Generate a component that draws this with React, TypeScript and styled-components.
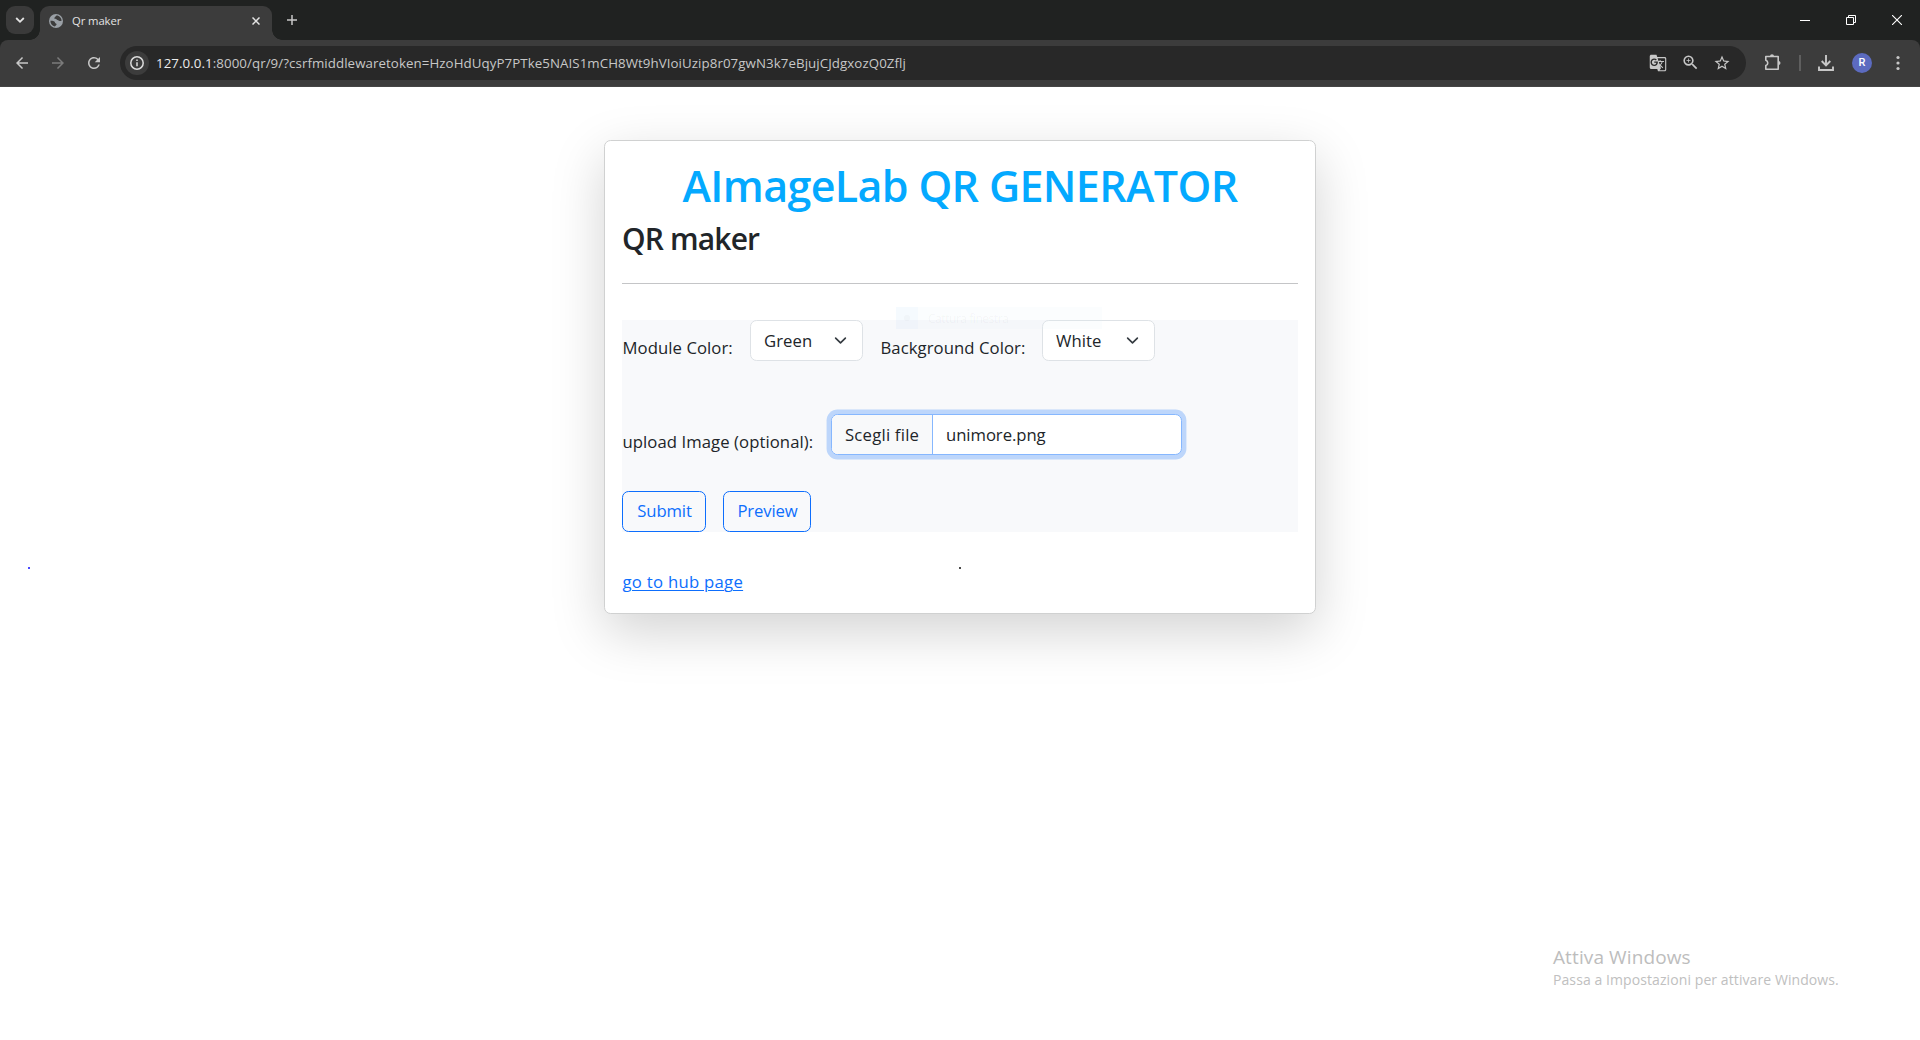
import React from "react";
import styled, { createGlobalStyle, css } from "styled-components";
import {
  MdArrowBack,
  MdArrowForward,
  MdGTranslate,
  MdRefresh,
  MdStarBorder,
  MdZoomIn,
} from "react-icons/md";

const GlobalStyle = createGlobalStyle`
  *, *::before, *::after { box-sizing: border-box; }
  html, body { margin: 0; padding: 0; background: #fff; }
  body { overflow: hidden; }
  svg { display: block; flex: none; }
`;

const Window = styled.div`
  position: relative;
  display: flex;
  flex-direction: column;
  width: 1920px;
  height: 1040px;
  background: #fff;
  color: #212529;
  font-family: "Open Sans", "Noto Sans", sans-serif;
`;

/* ---------- Browser chrome ---------- */

const TabStrip = styled.header`
  display: flex;
  align-items: flex-start;
  height: 40px;
  padding: 6px 0 0 6px;
  background: #202221;
`;

const TabSearch = styled.button`
  display: flex;
  align-items: center;
  justify-content: center;
  width: 28px;
  height: 28px;
  margin-right: 6px;
  padding: 0;
  border: 0;
  border-radius: 9px;
  background: #3a3a3a;
  color: #e3e3e3;
`;

const Tab = styled.div`
  position: relative;
  display: flex;
  align-items: center;
  width: 232px;
  height: 34px;
  padding: 0 12px 5px 9px;
  border-radius: 9px 9px 0 0;
  background: #3c3c3c;
  color: #e3e3e3;

  &::before,
  &::after {
    content: "";
    position: absolute;
    bottom: 0;
    width: 10px;
    height: 10px;
  }
  &::before {
    left: -10px;
    background: radial-gradient(circle at 0 0, transparent 9.5px, #3c3c3c 10px);
  }
  &::after {
    right: -10px;
    background: radial-gradient(circle at 100% 0, transparent 9.5px, #3c3c3c 10px);
  }
`;

const TabTitle = styled.span`
  flex: 1;
  margin-left: 9px;
  font-size: 11.3px;
  line-height: 16px;
  letter-spacing: -0.1px;
  white-space: nowrap;
`;

const NewTab = styled.button`
  display: flex;
  align-items: center;
  justify-content: center;
  width: 28px;
  height: 28px;
  margin-left: 6px;
  padding: 0;
  border: 0;
  background: none;
  color: #c7c7c7;
`;

const WindowControls = styled.div`
  display: flex;
  height: 28px;
  margin-left: auto;
`;

const WindowControl = styled.button`
  display: flex;
  align-items: center;
  justify-content: center;
  width: 46px;
  height: 28px;
  padding: 0;
  border: 0;
  background: none;
  color: #fff;
`;

const ToolbarBack = styled.div`
  background: #202221;
`;

const Toolbar = styled.nav`
  display: flex;
  align-items: center;
  height: 47px;
  padding: 0 4px 1px;
  border-bottom: 1px solid #454545;
  border-radius: 8px 8px 0 0;
  background: #3c3c3c;
`;

const IconSlot = styled.span<{ $w?: number; $dim?: boolean }>`
  display: flex;
  flex: none;
  align-items: center;
  justify-content: center;
  width: ${(p) => p.$w ?? 36}px;
  height: 34px;
  color: ${(p) => (p.$dim ? "#7b7b7b" : "#c7c7c7")};
`;

const Omnibox = styled.div`
  display: flex;
  flex: 1;
  align-items: center;
  height: 34px;
  margin: 0 8px;
  padding: 0 8px 0 5px;
  border-radius: 17px;
  background: #282828;
`;

const SiteInfo = styled.span`
  display: flex;
  align-items: center;
  justify-content: center;
  width: 24px;
  height: 24px;
  border-radius: 50%;
  background: #3c3c3c;
  color: #dcdcdc;
`;

const Url = styled.span`
  flex: 1;
  margin-left: 7px;
  color: #c7c7c7;
  font-size: 13.3px;
  line-height: 20px;
  letter-spacing: 0.072px;
  white-space: nowrap;
`;

const Host = styled.span`
  color: #ececec;
`;

const Separator = styled.i`
  width: 2px;
  height: 16px;
  background: #5f5f5f;
`;

const Avatar = styled.span`
  display: flex;
  align-items: center;
  justify-content: center;
  width: 20px;
  height: 20px;
  border-radius: 50%;
  background: #5c6bc0;
  color: #fff;
  font: 500 11px Roboto, sans-serif;
`;

/* ---------- Page ---------- */

const Page = styled.main`
  display: flex;
  flex: 1;
  align-items: flex-start;
  justify-content: center;
  padding-top: 53px;
`;

const Card = styled.section`
  width: 712px;
  height: 474px;
  padding: 18px 17px 17px;
  border: 1px solid #d0d1d1;
  border-radius: 6.6px;
  background: #fff;
  box-shadow: 0 17.6px 52.8px rgba(0, 0, 0, 0.175);
`;

const Title = styled.h1`
  margin: 0 0 8px;
  color: #04a9ff;
  font-size: 43px;
  font-weight: 600;
  line-height: 53px;
  letter-spacing: -0.65px;
  text-align: center;
  white-space: nowrap;
`;

const Subtitle = styled.h3`
  margin: 0;
  font-size: 30px;
  font-weight: 600;
  line-height: 37px;
  letter-spacing: -0.85px;
`;

const Rule = styled.hr`
  height: 1px;
  margin: 26px 0 36px;
  border: 0;
  background: #c4c5c7;
`;

const Form = styled.form`
  display: flex;
  flex-direction: column;
  background: #f8f9fb;
`;

const bodyText = css`
  font-family: inherit;
  font-size: 16.7px;
  line-height: 26px;
  letter-spacing: 0.07px;
  white-space: nowrap;
`;

const Row = styled.div<{ $after?: number }>`
  display: flex;
  height: 41px;
  margin-bottom: ${(p) => p.$after ?? 0}px;
`;

const Label = styled.label<{ $w: number }>`
  ${bodyText}
  width: ${(p) => p.$w}px;
  padding: 15px 0 0 0.5px;
`;

const SelectBox = styled.div<{ $after?: number }>`
  ${bodyText}
  display: flex;
  align-items: center;
  justify-content: space-between;
  width: 113px;
  height: 41px;
  margin-right: ${(p) => p.$after ?? 0}px;
  padding: 0 15px 0 13px;
  border: 1px solid #dee2e6;
  border-radius: 6.6px;
  background: #fff;
`;

const FileInput = styled.div`
  ${bodyText}
  display: flex;
  width: 351px;
  height: 41px;
  overflow: hidden;
  border: 1px solid #86b7fe;
  border-radius: 6.6px;
  background: #fff;
  box-shadow: 0 0 0 4.4px rgba(13, 110, 253, 0.25);
  line-height: 39px;
`;

const FileButton = styled.span`
  width: 101px;
  padding-left: 13px;
  border-right: 1px solid #86b7fe;
  background: #f8f9fa;
  letter-spacing: 0.22px;
`;

const FileName = styled.span`
  padding-left: 13px;
  letter-spacing: -0.06px;
`;

const OutlineButton = styled.button<{ $w: number }>`
  ${bodyText}
  width: ${(p) => p.$w}px;
  height: 41px;
  margin-right: 17px;
  padding: 0 0 1px 1px;
  border: 1px solid #0d6efd;
  border-radius: 6.6px;
  background: transparent;
  color: #0d6efd;
  letter-spacing: -0.12px;
`;

const HubLink = styled.a`
  ${bodyText}
  display: inline-block;
  margin: 37px 0 0 0.5px;
  color: #0d6efd;
  letter-spacing: 0.28px;
  text-decoration: underline;
  text-decoration-thickness: 1px;
  text-underline-offset: 2px;
`;

/* ---------- Things floating over the page ---------- */

const Speck = styled.i<{ $x: number; $y: number; $color: string }>`
  position: absolute;
  left: ${(p) => p.$x}px;
  top: ${(p) => p.$y}px;
  width: 2px;
  height: 2px;
  background: ${(p) => p.$color};
`;

const CaptureHint = styled.div`
  position: absolute;
  left: 896px;
  top: 307px;
  display: flex;
  align-items: center;
  width: 206px;
  height: 22px;
  background: rgba(225, 240, 250, 0.14);
  color: rgba(70, 80, 90, 0.05);
  font-size: 12px;
  letter-spacing: -0.45px;
`;

const CaptureDot = styled.span`
  display: flex;
  align-items: center;
  justify-content: center;
  width: 22px;
  height: 22px;
  margin-right: 10px;
  background: rgba(200, 230, 255, 0.1);

  &::before {
    content: "";
    width: 6px;
    height: 6px;
    border-radius: 50%;
    background: rgba(90, 100, 110, 0.03);
  }
`;

const Watermark = styled.aside`
  position: absolute;
  left: 1553px;
  top: 944px;
  color: #bdbdbd;
  white-space: nowrap;
`;

const WatermarkTitle = styled.div`
  font-size: 19px;
  line-height: 27px;
  letter-spacing: 0.11px;
`;

const WatermarkText = styled.div`
  font-size: 14px;
  line-height: 18px;
  letter-spacing: 0.085px;
  color: #c0c0c0;
`;

const Chevron = () => (
  <svg width="13" height="13" viewBox="0 0 16 16" fill="none" stroke="#343a40" strokeWidth="2" strokeLinecap="round" strokeLinejoin="round">
    <path d="m2 5 6 6 6-6" />
  </svg>
);

const Globe = () => (
  <svg width="14" height="14" viewBox="0 0 14 14">
    <circle cx="7" cy="7" r="7" fill="#9aa0a6" />
    <path d="M1.400 6.800c1.500-.1 3.300 0 4 .7.8.8.3 1.500 1.400 1.900 1 .4 1 1 .4 1.700-.4.5-.8 1-1.400 1.300C3.200 11.900 1.300 9.600 1.400 6.800Z" fill="#3c3c3c" />
    <path d="M7.600 1.500C6.300 2 6.700 3 5.600 3.500c-.6.5-.3 1.400.7 1.300 1.200-.1 1.200 1.200 2.200 1.300 1 .1 1.200.9 2.300.8.8-.1 1.300.2 1.800-.1C12.500 4.200 10.500 1.500 7.600 1.500Z" fill="#3c3c3c" />
  </svg>
);

export default function App() {
  return (
    <Window>
      <GlobalStyle />
      <TabStrip>
        <TabSearch>
          <svg width="10" height="10" viewBox="0 0 10 10" fill="none" stroke="currentColor" strokeWidth="1.8">
            <path d="m1.200 3 3.800 3.800L8.800 3" />
          </svg>
        </TabSearch>
        <Tab>
          <Globe />
          <TabTitle>Qr maker</TabTitle>
          <svg width="8" height="8" viewBox="0 0 8 8" stroke="currentColor" strokeWidth="1.500">
            <path d="m.5.5 7 7M7.500.5l-7 7" />
          </svg>
        </Tab>
        <NewTab>
          <svg width="10" height="10" viewBox="0 0 10 10" stroke="currentColor" strokeWidth="1.500">
            <path d="M5 0v10M0 5h10" />
          </svg>
        </NewTab>
        <WindowControls>
          <WindowControl>
            <svg width="10" height="10" viewBox="0 0 10 10" stroke="currentColor">
              <path d="M0 5.500h10" />
            </svg>
          </WindowControl>
          <WindowControl>
            <svg width="10" height="10" viewBox="0 0 10 10" fill="none" stroke="currentColor">
              <path d="M.5 2.500h7v7h-7zM2.500 2.500v-2h7v7h-2" />
            </svg>
          </WindowControl>
          <WindowControl>
            <svg width="10" height="10" viewBox="0 0 10 10" stroke="currentColor" strokeWidth="1.100">
              <path d="m0 0 10 10M10 0 0 10" />
            </svg>
          </WindowControl>
        </WindowControls>
      </TabStrip>

      <ToolbarBack>
        <Toolbar>
          <IconSlot><MdArrowBack size={18} /></IconSlot>
          <IconSlot $dim><MdArrowForward size={18} /></IconSlot>
          <IconSlot><MdRefresh size={18} /></IconSlot>
          <Omnibox>
            <SiteInfo>
              <svg width="14" height="14" viewBox="0 0 14 14" fill="none" stroke="currentColor" strokeWidth="1.500">
                <circle cx="7" cy="7" r="6.200" />
                <path d="M7 6.200v4M7 3.600v1.500" />
              </svg>
            </SiteInfo>
            <Url>
              <Host>127.0.0.1</Host>
              :8000/qr/9/?csrfmiddlewaretoken=HzoHdUqyP7PTke5NAIS1mCH8Wt9hVIoiUzip8r07gwN3k7eBjujCJdgxozQ0Zflj
            </Url>
            <IconSlot $w={32}><MdGTranslate size={18} /></IconSlot>
            <IconSlot $w={32}><MdZoomIn size={19} /></IconSlot>
            <IconSlot $w={32}><MdStarBorder size={18} /></IconSlot>
          </Omnibox>
          <IconSlot $w={37}>
            <svg width="17" height="17" viewBox="0 0 17 17" fill="none" stroke="currentColor" strokeWidth="1.600" strokeLinejoin="round">
              <path d="M1.800 2.500h12.400v12.700H1.800v-3.700a2.700 2.700 0 0 0 0-5.200Z" />
              <path d="M6 2.300a2 2 0 0 1 4 0ZM14.500 7a2 2 0 0 1 0 4Z" fill="currentColor" stroke="none" />
            </svg>
          </IconSlot>
          <IconSlot $w={17}><Separator /></IconSlot>
          <IconSlot>
            <svg width="16" height="16" viewBox="0 0 16 16" fill="none" stroke="currentColor" strokeWidth="1.900">
              <path d="M8 0v10M3.700 6 8 10.300 12.300 6M1 11.500v3.500h14v-3.500" />
            </svg>
          </IconSlot>
          <IconSlot><Avatar>R</Avatar></IconSlot>
          <IconSlot>
            <svg width="4" height="16" viewBox="0 0 4 16" fill="currentColor">
              <circle cx="2" cy="2.500" r="1.600" />
              <circle cx="2" cy="8" r="1.600" />
              <circle cx="2" cy="13.500" r="1.600" />
            </svg>
          </IconSlot>
        </Toolbar>
      </ToolbarBack>

      <Page>
        <Card>
          <Title>AImageLab QR GENERATOR</Title>
          <Subtitle>QR maker</Subtitle>
          <Rule />
          <Form>
            <Row $after={53}>
              <Label $w={128}>Module Color:</Label>
              <SelectBox $after={17}>Green<Chevron /></SelectBox>
              <Label $w={162}>Background Color:</Label>
              <SelectBox>White<Chevron /></SelectBox>
            </Row>
            <Row $after={36}>
              <Label $w={209}>upload Image (optional):</Label>
              <FileInput>
                <FileButton>Scegli file</FileButton>
                <FileName>unimore.png</FileName>
              </FileInput>
            </Row>
            <Row>
              <OutlineButton type="button" $w={84}>Submit</OutlineButton>
              <OutlineButton type="button" $w={88}>Preview</OutlineButton>
            </Row>
          </Form>
          <HubLink>go to hub page</HubLink>
        </Card>
      </Page>

      <CaptureHint><CaptureDot />Cattura finestra</CaptureHint>
      <Speck $x={28} $y={567} $color="#4a4aff" />
      <Speck $x={959} $y={567} $color="#4a4a4a" />
      <Watermark>
        <WatermarkTitle>Attiva Windows</WatermarkTitle>
        <WatermarkText>Passa a Impostazioni per attivare Windows.</WatermarkText>
      </Watermark>
    </Window>
  );
}
